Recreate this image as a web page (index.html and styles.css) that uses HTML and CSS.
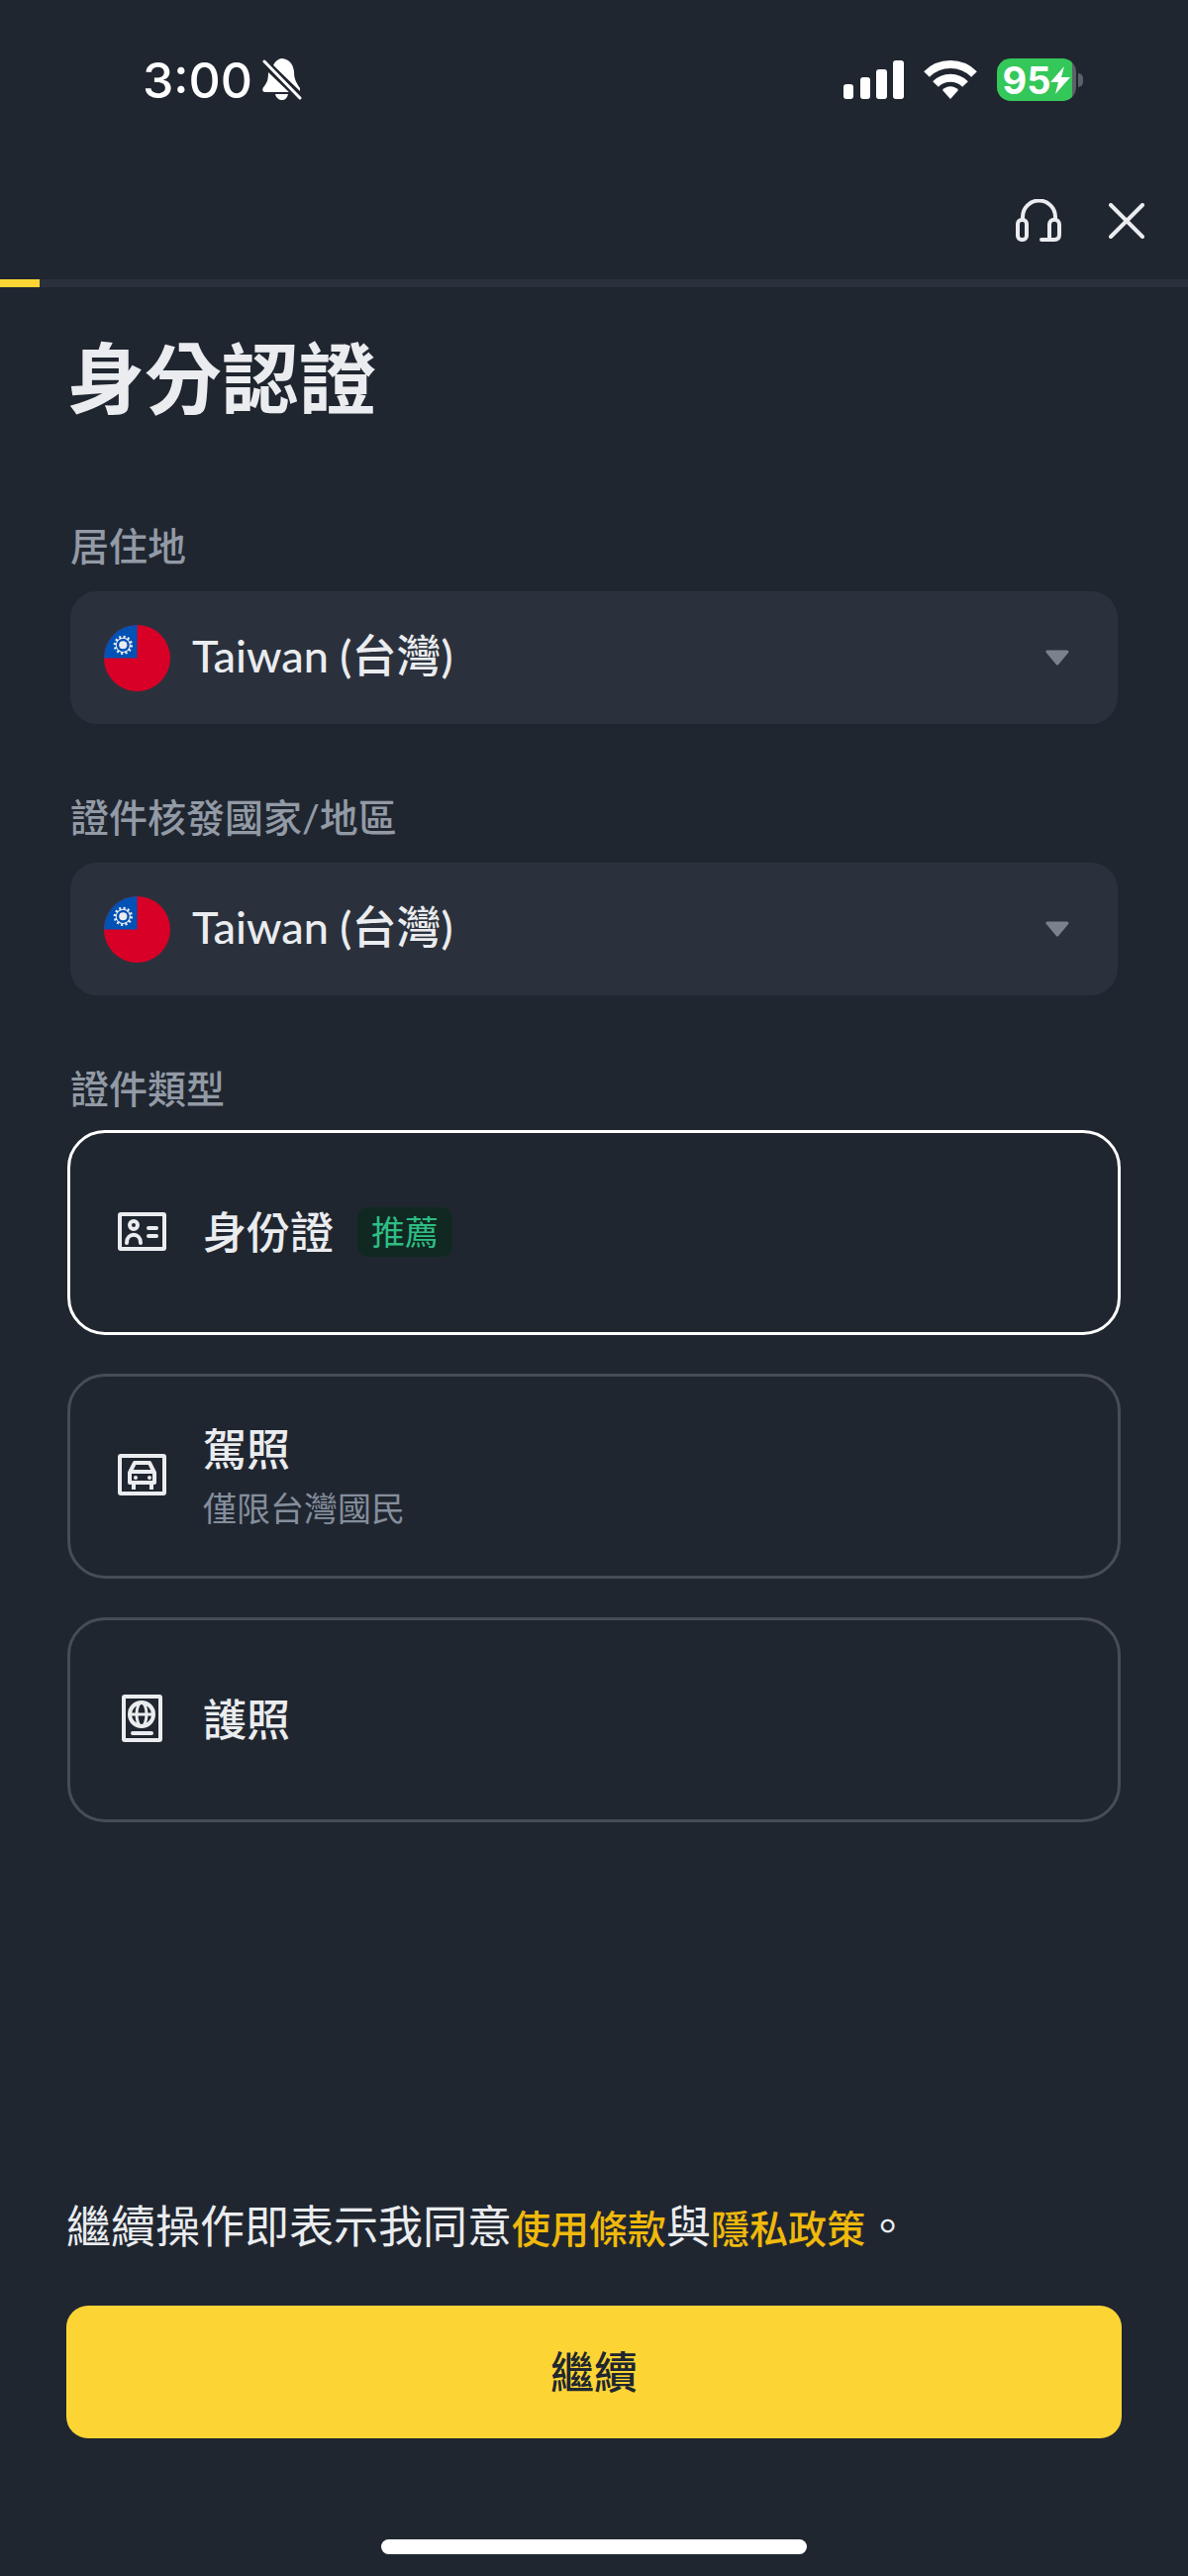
FILE: index.html
```html
<!DOCTYPE html>
<html lang="zh-Hant">
<head>
  <meta charset="UTF-8">
  <meta name="viewport" content="width=device-width, initial-scale=1.0">
  <title>身分認證</title>
  <link rel="stylesheet" href="styles.css">
</head>
<body>
  <div class="status">
    <div class="status-left">
      <span class="time">3:00</span>
      <svg class="bell" width="40" height="44" viewBox="0 0 40 44" fill="#fff">
        <path d="M11 7C13 3 15 1 19 0c7 0 12 5 13 13 0 8 2 11 6 17v3z"/>
        <path d="M6 14l21 20H3c-4 0-3-4-1-6 3-4 4-7 4-14z"/>
        <path d="M13 36h13c-1 4-3 6-6 6s-6-2-7-6z"/>
        <path d="M2 3l36 37" stroke="#202630" stroke-width="7"/>
        <path d="M2 3l36 37" stroke="#fff" stroke-width="3" stroke-linecap="round"/>
      </svg>
    </div>
    <div class="status-right">
      <svg width="61" height="40" viewBox="0 0 61 40" fill="#fff">
        <rect x="0" y="24" width="10" height="15" rx="3"/>
        <rect x="17" y="17" width="10" height="22" rx="3"/>
        <rect x="33" y="9" width="11" height="30" rx="3"/>
        <rect x="50" y="0" width="11" height="39" rx="3"/>
      </svg>
      <svg class="wifi" width="54" height="40" viewBox="0 0 54 40" fill="none" stroke="#fff" stroke-width="8">
        <path d="M3 14a34 34 0 0 1 48 0"/>
        <path d="M12 24a21 21 0 0 1 30 0"/>
        <path d="M27 39l-8-9c4-5 12-5 16 0z" fill="#fff" stroke="none"/>
      </svg>
      <div class="battery">
        <span>95</span>
        <svg width="20" height="28" viewBox="0 0 20 28" fill="#fff">
          <path d="M14 0L0 16h8L5 28 20 11h-9z"/>
        </svg>
      </div>
      <div class="battery-tip"></div>
    </div>
  </div>

  <div class="toolbar">
    <button type="button" aria-label="客服">
      <svg width="48" height="44" viewBox="0 0 48 44" fill="none" stroke="#eaecef" stroke-width="4" stroke-linecap="round">
        <path d="M8 20v-2a16 16 0 0 1 33 0v2"/>
        <rect x="3" y="21" width="9" height="20" rx="4"/>
        <path d="M27 41h13c4 0 5-2 5-5V26c0-7-10-7-10 0v15"/>
      </svg>
    </button>
    <button type="button" aria-label="關閉">
      <svg width="36" height="36" viewBox="0 0 36 36" fill="none" stroke="#eaecef" stroke-width="4" stroke-linecap="round">
        <path d="M2 2l32 32M34 2L2 34"/>
      </svg>
    </button>
  </div>
  <div class="progress"><div class="bar"></div></div>

  <!-- flag shared by both drop-downs -->
  <svg class="defs" width="0" height="0">
    <symbol id="flag" viewBox="0 0 66 66">
      <circle cx="33" cy="33" r="33" fill="#d80027"/>
      <path d="M33 33V0A33 33 0 0 0 0 33z" fill="#0052b4"/>
      <circle cx="19" cy="20" r="8" fill="none" stroke="#eaecef" stroke-width="3" stroke-dasharray="2 2.19"/>
      <circle cx="19" cy="20" r="7" fill="none" stroke="#eaecef" stroke-width="1"/>
      <circle cx="19" cy="20" r="4" fill="#eaecef"/>
    </symbol>
    <symbol id="arrow" viewBox="0 0 24 16">
      <path d="M2 2h20L12 14z" fill="#7b828d" stroke="#7b828d" stroke-width="3" stroke-linejoin="round"/>
    </symbol>
  </svg>

  <main>
    <h1>身分認證</h1>

    <label class="field-label" for="residence">居住地</label>
    <div class="select">
      <svg class="flag"><use href="#flag"/></svg>
      <select id="residence">
        <option>Taiwan (台灣)</option>
      </select>
      <svg class="arrow"><use href="#arrow"/></svg>
    </div>

    <label class="field-label" for="country">證件核發國家/地區</label>
    <div class="select">
      <svg class="flag"><use href="#flag"/></svg>
      <select id="country">
        <option>Taiwan (台灣)</option>
      </select>
      <svg class="arrow"><use href="#arrow"/></svg>
    </div>

    <fieldset>
      <legend class="field-label">證件類型</legend>
      <div class="cards">
        <label class="card">
          <input type="radio" name="doc" value="id" checked>
          <svg width="50" height="50" viewBox="0 0 50 50" fill="none" stroke="#eaecef" stroke-width="4" stroke-linecap="round">
            <rect x="2" y="7" width="45" height="35" rx="1"/>
            <circle cx="16" cy="18" r="4"/>
            <path d="M9 36c0-11 14-11 14 0M31 21h8M31 29h8"/>
          </svg>
          <span class="name">身份證</span>
          <span class="tag">推薦</span>
        </label>
        <label class="card">
          <input type="radio" name="doc" value="license">
          <svg width="50" height="50" viewBox="0 0 50 50" fill="none" stroke="#eaecef" stroke-width="4">
            <rect x="2" y="5" width="45" height="38" rx="1"/>
            <path d="M12 22l5-10h15l5 10v10H12zM12 21h25M16 32v7M34 32v7" stroke-linejoin="round"/>
            <circle cx="18" cy="27" r="2" fill="#eaecef" stroke="none"/>
            <circle cx="32" cy="27" r="2" fill="#eaecef" stroke="none"/>
          </svg>
          <span class="texts">
            <span class="name">駕照</span>
            <span class="note">僅限台灣國民</span>
          </span>
        </label>
        <label class="card">
          <input type="radio" name="doc" value="passport">
          <svg width="50" height="50" viewBox="0 0 50 50" fill="none" stroke="#eaecef" stroke-width="4">
            <rect x="6" y="2" width="37" height="44" rx="1"/>
            <circle cx="24" cy="20" r="12"/>
            <ellipse cx="24" cy="20" rx="5" ry="12" stroke-width="3"/>
            <path d="M12 20h24" stroke-width="3"/>
            <path d="M15 39h19" stroke-linecap="round"/>
          </svg>
          <span class="name">護照</span>
        </label>
      </div>
    </fieldset>
  </main>

  <footer>
    <p>繼續操作即表示我同意<a href="#">使用條款</a>與<a href="#">隱私政策</a>。</p>
    <button type="button" class="continue">繼續</button>
    <div class="home"></div>
  </footer>
</body>
</html>
```
FILE: styles.css
```css
*{
  margin: 0;
  padding: 0;
  box-sizing: border-box;
}
body{
  display: flex;
  flex-direction: column;
  min-height: 100vh;
  background-color: #202630;
  color: #eaecef;
  font-family: Lato, "Noto Sans CJK TC", sans-serif;
  font-size: 45px;
}
button, select{
  border: none;
  background: none;
  color: inherit;
  font: inherit;
  cursor: pointer;
}
svg{
  display: block;
  flex: none;
}
.defs{
  position: absolute;
}

/* status bar */
.status{
  display: flex;
  justify-content: space-between;
  align-items: center;
  height: 164px;
  padding: 0 106px 3px 144px;
  color: #fff;
  font-family: Inter, sans-serif;
}
.status-left, .status-right{
  display: flex;
  align-items: center;
}
.time{
  font-size: 50px;
  font-weight: 500;
}
.bell{
  margin-left: 10px;
}
.wifi{
  margin: 0 20px;
}
.battery{
  display: flex;
  align-items: center;
  justify-content: center;
  width: 80px;
  height: 43px;
  border-radius: 14px;
  background: linear-gradient(to right, #34c759 76px, #5b6169 76px);
  font-size: 38px;
  font-weight: 700;
}
.battery-tip{
  width: 5px;
  height: 14px;
  margin-left: 2px;
  border-radius: 0 7px 7px 0;
  background-color: #5b6169;
}

.toolbar{
  display: flex;
  justify-content: flex-end;
  align-items: center;
  gap: 47px;
  height: 118px;
  padding-right: 44px;
}
.progress{
  height: 8px;
  background-color: #2b313c;
}
.bar{
  width: 40px;
  height: 100%;
  background-color: #fcd535;
}

main{
  flex: 1;
  padding: 36px 71px 0;
}
h1{
  margin: 0 -3px 84px;
  font-size: 78px;
  line-height: 112px;
}
.field-label{
  display: block;
  color: #929aa5;
  font-size: 39px;
  font-weight: 500;
  line-height: 58px;
}
.select{
  display: flex;
  align-items: center;
  height: 134px;
  margin: 17px 0 65px;
  padding: 0 49px 0 34px;
  border-radius: 27px;
  background-color: #2b313c;
}
.select select{
  flex: 1;
  height: 100%;
  padding: 0 0 4px 22px;
  appearance: none;
  outline: none;
  font-weight: 500;
}
.flag{
  width: 67px;
  height: 67px;
}
.arrow{
  width: 24px;
  height: 16px;
}

fieldset{
  border: none;
}
.cards{
  display: grid;
  gap: 39px;
  margin: 13px -3px 0;
}
.card{
  display: flex;
  align-items: center;
  height: 207px;
  padding: 0 48px 2px;
  border: 3px solid #474d57;
  border-radius: 38px;
  cursor: pointer;
}
.card:has(input:checked){
  border-color: #fff;
}
.card input{
  position: absolute;
  opacity: 0;
}
.name{
  margin-left: 36px;
  font-size: 44px;
  font-weight: 500;
  line-height: 66px;
}
.tag{
  margin-left: 24px;
  padding: 0 14px;
  border-radius: 10px;
  background-color: #102821;
  color: #2ebd85;
  font-size: 34px;
  line-height: 50px;
}
.texts{
  display: grid;
}
.note{
  margin-left: 36px;
  color: #848e9c;
  font-size: 34px;
  line-height: 54px;
}

footer{
  padding: 0 67px 22px;
}
footer p{
  margin-bottom: 45px;
  line-height: 66px;
}
footer a{
  color: #f0b90b;
  font-size: 39px;
  font-weight: 500;
  text-decoration: none;
}
.continue{
  display: block;
  width: 100%;
  height: 134px;
  border-radius: 22px;
  background-color: #fcd535;
  color: #202630;
  font-size: 44px;
  font-weight: 500;
  line-height: 66px;
}
.home{
  width: 430px;
  height: 15px;
  margin: 102px auto 0;
  border-radius: 8px;
  background-color: #fff;
}
```
